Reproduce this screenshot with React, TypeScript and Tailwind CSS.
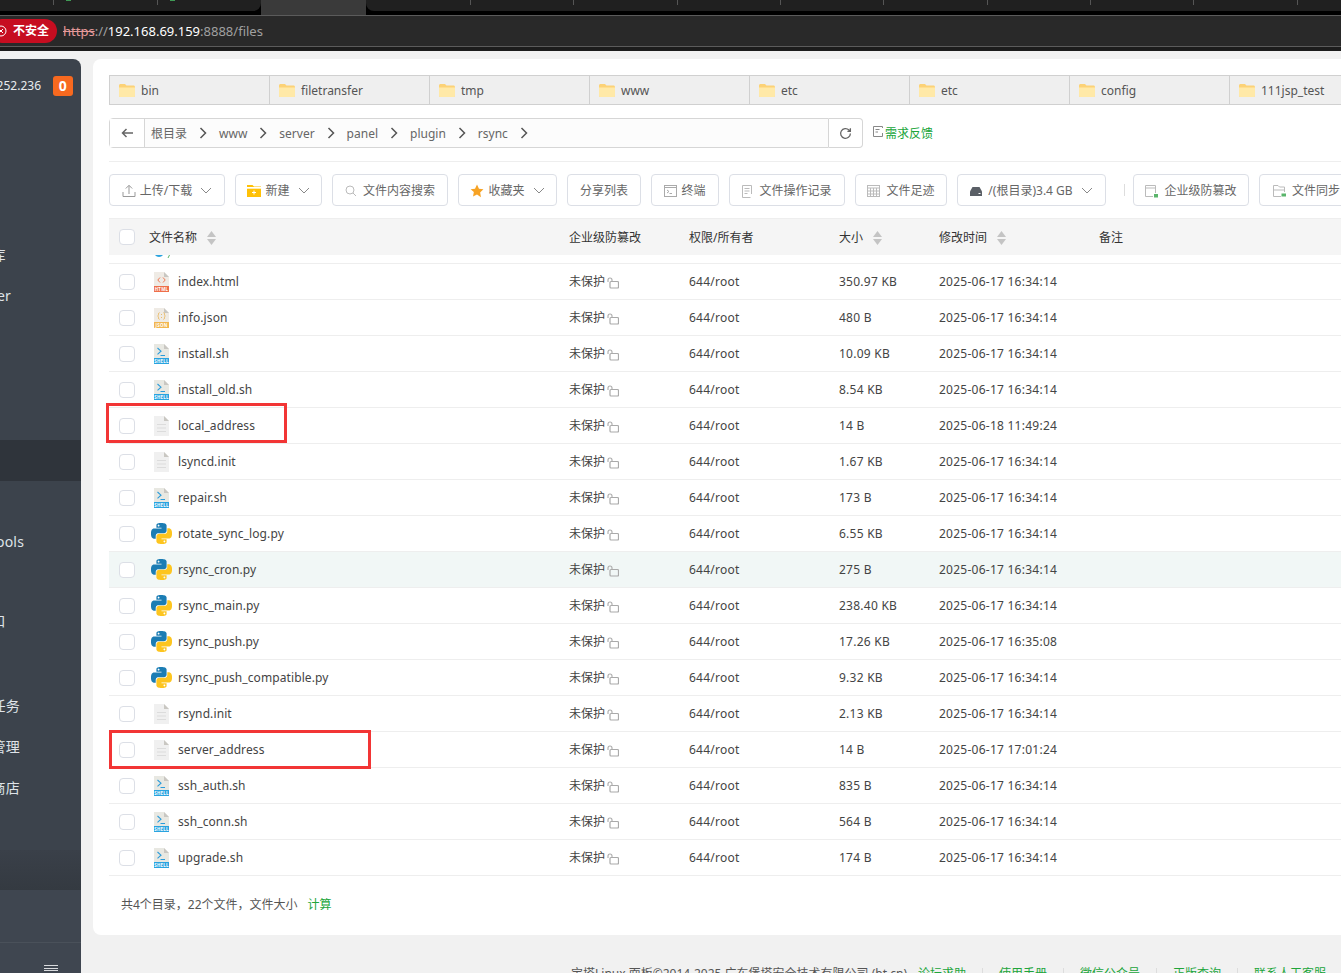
const tabs = ["bin", "filetransfer", "tmp", "www", "etc", "etc", "config", "111jsp_test"]
const crumbs = ["根目录", "www", "server", "panel", "plugin", "rsync"]
const menu = ["", "", "", "数据库", "Docker", "", "", "", "", "", "WP Tools", "", "接入口", "", "计划任务", "软件管理", "软件商店", ""]

const files = [
  { name: "index.html", icon: "html", size: "350.97 KB", time: "2025-06-17 16:34:14" },
  { name: "info.json", icon: "json", size: "480 B", time: "2025-06-17 16:34:14" },
  { name: "install.sh", icon: "shell", size: "10.09 KB", time: "2025-06-17 16:34:14" },
  { name: "install_old.sh", icon: "shell", size: "8.54 KB", time: "2025-06-17 16:34:14" },
  { name: "local_address", icon: "doc", size: "14 B", time: "2025-06-18 11:49:24" },
  { name: "lsyncd.init", icon: "doc", size: "1.67 KB", time: "2025-06-17 16:34:14" },
  { name: "repair.sh", icon: "shell", size: "173 B", time: "2025-06-17 16:34:14" },
  { name: "rotate_sync_log.py", icon: "py", size: "6.55 KB", time: "2025-06-17 16:34:14" },
  { name: "rsync_cron.py", icon: "py", size: "275 B", time: "2025-06-17 16:34:14" },
  { name: "rsync_main.py", icon: "py", size: "238.40 KB", time: "2025-06-17 16:34:14" },
  { name: "rsync_push.py", icon: "py", size: "17.26 KB", time: "2025-06-17 16:35:08" },
  { name: "rsync_push_compatible.py", icon: "py", size: "9.32 KB", time: "2025-06-17 16:34:14" },
  { name: "rsynd.init", icon: "doc", size: "2.13 KB", time: "2025-06-17 16:34:14" },
  { name: "server_address", icon: "doc", size: "14 B", time: "2025-06-17 17:01:24" },
  { name: "ssh_auth.sh", icon: "shell", size: "835 B", time: "2025-06-17 16:34:14" },
  { name: "ssh_conn.sh", icon: "shell", size: "564 B", time: "2025-06-17 16:34:14" },
  { name: "upgrade.sh", icon: "shell", size: "174 B", time: "2025-06-17 16:34:14" },
]

function Folder() {
  return (
    <svg width="16" height="13" viewBox="0 0 16 13" className="shrink-0">
      <path d="M1.5 0H6L7.5 1.5H14.5C15.3 1.5 16 2.2 16 3V11.5C16 12.3 15.3 13 14.5 13H1.5C.7 13 0 12.3 0 11.5V1.5C0 .7.7 0 1.5 0Z" fill="#fcd277" />
      <path d="M0 3.6H16V11.5C16 12.3 15.3 13 14.5 13H1.5C.7 13 0 12.3 0 11.5Z" fill="#ffe9a8" />
    </svg>
  )
}

function Chevron({ className = "" }: { className?: string }) {
  return (
    <svg width="8" height="12" viewBox="0 0 8 12" className={className}>
      <path d="M1.5 1L6.5 6L1.5 11" fill="none" stroke="#555" strokeWidth="1.5" />
    </svg>
  )
}

function Caret() {
  return (
    <svg width="12" height="7" viewBox="0 0 12 7" className="shrink-0">
      <path d="M1 1L6 6L11 1" fill="none" stroke="#888" strokeWidth="1" />
    </svg>
  )
}

function SortArrows() {
  return (
    <svg width="9" height="14" viewBox="0 0 9 14" className="ml-[10px] shrink-0">
      <path d="M4.5 0L9 6H0Z" fill="#c4c4c4" />
      <path d="M0 8H9L4.5 14Z" fill="#c4c4c4" />
    </svg>
  )
}

function Lock() {
  return (
    <svg width="12" height="12" viewBox="0 0 12 12" className="mt-[3px] ml-[2px] shrink-0">
      <path d="M1 5V3C1 1.7 1.9 1 3 1S5 1.7 5 3V4.5" fill="none" stroke="#aaa" strokeWidth="1.1" />
      <rect x="3" y="4.5" width="8.5" height="6.5" rx="1" fill="none" stroke="#aaa" strokeWidth="1.2" />
    </svg>
  )
}

function Python() {
  return (
    <svg width="21" height="21" viewBox="0 0 24 24">
      <path
        fill="#1b7db4"
        d="M14.25.18l.9.2.73.26.59.3.45.32.34.34.25.34.16.33.1.3.04.26.02.2-.01.13V8.5l-.05.63-.13.55-.21.46-.26.38-.3.31-.33.25-.35.19-.35.14-.33.1-.3.07-.26.04-.21.02H8.77l-.69.05-.59.14-.5.22-.41.27-.33.32-.27.35-.2.36-.15.37-.1.35-.07.32-.04.27-.02.21v3.06H3.17l-.21-.03-.28-.07-.32-.12-.35-.18-.36-.26-.36-.36-.35-.46-.32-.59-.28-.73-.21-.88-.14-1.05-.05-1.23.06-1.22.16-1.04.24-.87.32-.71.36-.57.4-.44.42-.33.42-.24.4-.16.36-.1.32-.05.24-.01h.16l.06.01h8.16v-.83H6.18l-.01-2.75-.02-.37.05-.34.11-.31.17-.28.25-.26.31-.23.38-.2.44-.18.51-.15.58-.12.64-.1.71-.06.77-.04.84-.02 1.27.05zm-6.3 1.98l-.23.33-.08.41.08.41.23.34.33.22.41.09.41-.09.33-.22.23-.34.08-.41-.08-.41-.23-.33-.33-.22-.41-.09-.41.09z"
      />
      <path
        fill="#fdc51f"
        d="M21.04 6.11l.28.06.32.12.35.18.36.27.36.35.35.47.32.59.28.73.21.88.14 1.04.05 1.23-.06 1.23-.16 1.04-.24.86-.32.71-.36.57-.4.45-.42.33-.42.24-.4.16-.36.09-.32.05-.24.02-.16-.01h-8.22v.82h5.84l.01 2.76.02.36-.05.34-.11.31-.17.29-.25.25-.31.24-.38.2-.44.17-.51.15-.58.13-.64.09-.71.07-.77.04-.84.01-1.27-.04-1.07-.14-.9-.2-.73-.25-.59-.3-.45-.33-.34-.34-.25-.34-.16-.33-.1-.3-.04-.25-.02-.2.01-.13v-5.34l.05-.64.13-.54.21-.46.26-.38.3-.32.33-.24.35-.2.35-.14.33-.1.3-.06.26-.04.21-.02.13-.01h5.84l.69-.05.59-.14.5-.21.41-.28.33-.32.27-.35.2-.36.15-.36.1-.35.07-.32.04-.28.02-.21V6.07h2.09l.14.01zm-6.47 14.25l-.23.33-.08.41.08.41.23.33.33.23.41.08.41-.08.33-.23.23-.33.08-.41-.08-.41-.23-.33-.33-.23-.41-.08-.41.08z"
      />
    </svg>
  )
}

function FileIcon({ type }: { type: string }) {
  if (type === "py") return <Python />
  const band = type === "html" ? "#ee6f4a" : type === "json" ? "#f2b650" : "#2aa3df"
  const page = type === "doc" ? "#f0f0f0" : type === "shell" ? "#e8e8e2" : "#efebe5"
  return (
    <svg width="15" height="20" viewBox="0 0 15 20">
      <path d="M0 0H10L15 5V20H0Z" fill={page} />
      <path d="M10 0L15 5H10Z" fill="#c9c7c2" />
      {type === "doc" ? (
        <path d="M3 8.5H12M3 12H12M3 15.5H12" stroke="#dcdcdc" strokeWidth="1" />
      ) : (
        <rect x="0" y="14" width="15" height="6" fill={band} />
      )}
      {type === "html" && <path d="M6 5.5L3.8 8L6 10.5M9 5.5L11.2 8L9 10.5" fill="none" stroke="#ee7a55" strokeWidth="1" />}
      {type === "json" && <path d="M5.5 4.5C4 4.5 5 8 3.7 8C5 8 4 11.5 5.5 11.5M9.5 4.5C11 4.5 10 8 11.3 8C10 8 11 11.5 9.5 11.5M7.5 6V7M7.5 9V10" fill="none" stroke="#eab85f" strokeWidth=".9" />}
      {type === "shell" && <path d="M3.5 4L7 7.2L3.5 10.4M6.5 11.5H11" fill="none" stroke="#2a9cdb" strokeWidth="1.1" />}
      {type !== "doc" && (
        <text x="7.5" y="18.7" fontSize="4.4" fontWeight="700" textAnchor="middle" fill="#fff">
          {type === "html" ? "HTML" : type === "json" ? "JSON" : "SHELL"}
        </text>
      )}
    </svg>
  )
}

function ToolButton({ width, icon, label, caret }: { width: string; icon?: React.ReactNode; label: string; caret?: boolean }) {
  return (
    <button className={`flex h-8 shrink-0 items-center justify-center gap-1 rounded border border-[#dcdfe6] bg-white pt-[2px] text-xs text-[#666] ${width}`}>
      {icon}
      <span>{label}</span>
      {caret && <span className="mb-[2px] ml-1"><Caret /></span>}
    </button>
  )
}

function Toolbar() {
  return (
    <div className="mt-3 flex items-center gap-[10px]">
      <ToolButton
        width="w-[116px]"
        caret
        label="上传/下载"
        icon={
          <svg width="14" height="14" viewBox="0 0 14 14" fill="none" stroke="#999" strokeWidth="1">
            <path d="M7 10V1.5M3.8 4.5L7 1.3L10.2 4.5M1 8V12.5H13V8" />
          </svg>
        }
      />
      <ToolButton
        width="w-[87px]"
        caret
        label="新建"
        icon={
          <svg width="14" height="12" viewBox="0 0 14 12">
            <path d="M0 0H5.5L7 1.5H14V12H0Z" fill="#ffc107" />
            <path d="M0 2.5H14V3.2H0ZM5 7.5H9M7 5.5V9.5" stroke="#fff" strokeWidth="1" fill="none" />
          </svg>
        }
      />
      <ToolButton
        width="w-[116px]"
        label="文件内容搜索"
        icon={
          <svg width="12" height="12" viewBox="0 0 12 12" fill="none" stroke="#bbb" strokeWidth="1" className="mr-[2px]">
            <circle cx="5" cy="5" r="4" />
            <path d="M8 8L11 11" />
          </svg>
        }
      />
      <ToolButton
        width="w-[99px]"
        caret
        label="收藏夹"
        icon={
          <svg width="14" height="14" viewBox="0 0 24 24">
            <path d="M12 1l3.4 7.2 7.6 1-5.6 5.4 1.4 7.9L12 18l-6.8 3.5 1.4-7.9L1 9.2l7.6-1z" fill="#f7a325" />
          </svg>
        }
      />
      <ToolButton width="w-[74px]" label="分享列表" />
      <ToolButton
        width="w-[68px]"
        label="终端"
        icon={
          <svg width="13" height="12" viewBox="0 0 13 12" fill="none" stroke="#aaa" strokeWidth="1">
            <rect x=".5" y=".5" width="12" height="11" />
            <path d="M.5 2.5H12.5M3 5L5 6.5L3 8M5.5 8.5H8" />
          </svg>
        }
      />
      <ToolButton
        width="w-[116px]"
        label="文件操作记录"
        icon={
          <svg width="11" height="13" viewBox="0 0 11 13" fill="none" stroke="#bbb" strokeWidth="1" className="mr-[2px]">
            <path d="M8.5 12.5H.5V.5H9.5V9M2.5 3.5H7.5M2.5 6H7.5M2.5 8.5H5.5" />
          </svg>
        }
      />
      <ToolButton
        width="w-[92px]"
        label="文件足迹"
        icon={
          <svg width="13" height="12" viewBox="0 0 13 12" fill="none" stroke="#bbb" strokeWidth="1" className="mr-[2px]">
            <rect x=".5" y=".5" width="12" height="11" />
            <path d="M.5 3H12.5M.5 6H12.5M.5 9H12.5M3.5 3V11.5M6.5 3V11.5M9.5 3V11.5" />
          </svg>
        }
      />
      <ToolButton
        width="w-[149px]"
        caret
        label="/(根目录)3.4 GB"
        icon={
          <svg width="12" height="9" viewBox="0 0 12 9" className="mr-[2px]">
            <path d="M2.5 0H9.5L12 4.5V9H0V4.5Z" fill="#5a5f66" />
            <path d="M8.5 6.5H10.5" stroke="#fff" strokeWidth="1" />
          </svg>
        }
      />
      <div className="mr-[-2px] ml-2 h-3 w-px shrink-0 bg-[#ddd]" />
      <ToolButton
        width="w-[116px]"
        label="企业级防篡改"
        icon={
          <svg width="13" height="13" viewBox="0 0 13 13" className="mr-[2px]">
            <path d="M10.5 8V.5H.5V11.5H8M.5 3H10.5" fill="none" stroke="#bbb" strokeWidth="1" />
            <rect x="9" y="9" width="4" height="3.5" fill="#5ab56b" />
          </svg>
        }
      />
      <ToolButton
        width="w-[95px]"
        label="文件同步"
        icon={
          <svg width="13" height="12" viewBox="0 0 13 12" className="mr-[2px]">
            <path d="M8 11.5H.5V.5H5L6.5 2H11.5V7M.5 5H12" fill="none" stroke="#bbb" strokeWidth="1" />
            <rect x="8.5" y="8.5" width="4.5" height="3" fill="#5ab56b" />
          </svg>
        }
      />
    </div>
  )
}

function Checkbox() {
  return <div className="ml-[10px] h-4 w-4 rounded-sm border border-[#dcdfe6] bg-white" />
}

const columns = "grid grid-cols-[40px_420px_120px_150px_100px_160px_1fr] items-center"

function FileTable() {
  return (
    <div className="mt-3 text-xs text-[#444]">
      <div className={`${columns} h-[37px] border-t border-[#eeeeee] bg-[#f5f5f5] text-[#333]`}>
        <Checkbox />
        <div className="flex items-center pt-[2px]">文件名称<SortArrows /></div>
        <div className="pt-[2px]">企业级防篡改</div>
        <div className="pt-[2px]">权限/所有者</div>
        <div className="flex items-center pt-[2px]">大小<SortArrows /></div>
        <div className="flex items-center pt-[2px]">修改时间<SortArrows /></div>
        <div className="pt-[2px]">备注</div>
      </div>
      <div className="h-[9px] overflow-hidden border-b border-[#eeeeee]">
        <svg width="24" height="4" viewBox="0 0 24 4" className="ml-[44px]">
          <path d="M2 0C4 2.5 8 2.5 10 0Z" fill="#2aa3df" />
          <path d="M15 3L16.5 0" stroke="#5ab56b" strokeWidth="1" />
        </svg>
      </div>
      {files.map((f) => (
        <div key={f.name} className={`${columns} relative h-9 border-b border-[#eeeeee] tracking-[0.25px] ${f.name === "rsync_cron.py" ? "bg-[#f1f7f6]" : ""}`}>
          <Checkbox />
          <div className="flex items-center">
            <div className="flex w-[25px] justify-center"><FileIcon type={f.icon} /></div>
            <span className="ml-1 tracking-[0.1px]">{f.name}</span>
          </div>
          <div className="flex items-center tracking-normal">未保护<Lock /></div>
          <div>644/root</div>
          <div>{f.size}</div>
          <div>{f.time}</div>
          <div />
          {f.name === "local_address" && <div className="absolute top-[-5px] left-[-3px] h-[40px] w-[181px] border-[3px] border-[#f23535]" />}
          {f.name === "server_address" && <div className="absolute top-[-2px] left-0 h-[39px] w-[262px] border-[3px] border-[#f23535]" />}
        </div>
      ))}
      <div className="flex h-[59px] items-center pb-[2px] pl-3 text-[#555]">
        共4个目录，22个文件，文件大小
        <span className="ml-[10px] text-[#20a53a]">计算</span>
      </div>
    </div>
  )
}

function Sidebar() {
  return (
    <aside className="mt-2 flex h-[914px] w-[81px] shrink-0 flex-col overflow-hidden rounded-tr-lg bg-[#3c434c] text-sm tracking-[0.25px] text-[#dfe3e8]">
      <div className="flex h-[53px] shrink-0 items-center justify-end gap-3 pr-2">
        <span className="whitespace-nowrap text-xs tracking-normal text-[#e8ebee]">252.236</span>
        <span className="flex h-5 w-5 shrink-0 items-center justify-center rounded-[3px] bg-[#f7691f] font-bold text-white">0</span>
      </div>
      {menu.map((m, i) => (
        <div key={i} className={`flex h-[41px] shrink-0 items-center whitespace-nowrap ${i === 8 ? "bg-[#2f343b]" : ""} ${i === 12 ? "pb-2" : "pb-[2px]"}`}>
          <span className="-ml-[37px]">{m}</span>
        </div>
      ))}
      <div className="h-10 shrink-0 bg-gradient-to-b from-[#3a4049] to-[#343a41]" />
      <div className="h-[53px] shrink-0 border-b border-[#4a515a] bg-[#3f4650]" />
      <div className="flex flex-1 justify-end bg-[#3f4650] pt-[22px] pr-[23px]">
        <div className="flex h-[6px] w-[14px] flex-col justify-between">
          <div className="h-px bg-[#d8dadd]" />
          <div className="h-px bg-[#d8dadd]" />
          <div className="h-px bg-[#d8dadd]" />
        </div>
      </div>
    </aside>
  )
}

function BrowserBar() {
  const dividers = ["left-[53px]", "left-[157px]"]
  const rightDividers = ["left-[104px]", "left-[207px]", "left-[311px]", "left-[414px]", "left-[517px]", "left-[621px]", "left-[724px]", "left-[827px]", "left-[931px]"]
  return (
    <div className="shrink-0 bg-[#1c1c1c]">
      <div className="flex h-[15px] bg-black">
        <div className="relative h-[11px] w-[261px] rounded-br-lg bg-[#202020]">
          {dividers.map((d) => <div key={d} className={`absolute top-0 h-[5px] w-px bg-[#555] ${d}`} />)}
          <div className="absolute top-0 left-[66px] h-px w-[5px] bg-[#3f9a55]" />
          <div className="absolute top-0 left-[170px] h-px w-[5px] bg-[#3f9a55]" />
        </div>
        <div className="h-full w-[105px] bg-[#3a3a3a]" />
        <div className="relative h-[11px] flex-1 rounded-bl-lg bg-[#202020]">
          {rightDividers.map((d) => <div key={d} className={`absolute top-0 h-[5px] w-px bg-[#555] ${d}`} />)}
        </div>
      </div>
      <div className="flex h-[32px] items-center border-y border-[#5b5b5b] bg-[#292929]">
        <div className="-ml-[10px] flex h-6 w-[67px] shrink-0 items-center rounded-full bg-[#c60d20] pl-[5px] text-xs font-bold text-white">
          <svg width="12" height="12" viewBox="0 0 12 12" fill="none" stroke="#fff" strokeWidth="1" className="mr-[6px]">
            <circle cx="6" cy="6" r="5" />
            <path d="M4 4L8 8M8 4L4 8" />
          </svg>
          不安全
        </div>
        <div className="ml-[6px] pt-[2px] text-[13px] text-[#a0a0a0]">
          <span className="text-[#e59a9a] line-through">https</span>://<span className="text-white">192.168.69.159</span>:8888/files
        </div>
      </div>
      <div className="h-1 bg-[#1c1c1c]" />
    </div>
  )
}

export default function App() {
  return (
    <div className="flex h-[973px] w-[1341px] flex-col overflow-hidden bg-[#f1f1f1] font-['Noto_Sans','Noto_Sans_CJK_SC',sans-serif]">
      <BrowserBar />
      <div className="flex min-h-0 flex-1">
        <Sidebar />
        <main className="ml-3 mt-2 w-[1400px] shrink-0">
          <div className="h-[876px] rounded-lg bg-white pt-4 pl-4">
            <div className="flex">
              {tabs.map((t, i) => (
                <div key={i} className="-mr-px flex h-[30px] w-[161px] shrink-0 items-center gap-[6px] border border-[#d0d0d0] bg-[#efefef] pl-[9px] text-xs text-[#555]">
                  <Folder />
                  <span className="pt-[2px]">{t}</span>
                </div>
              ))}
            </div>

            <div className="mt-[13px] flex items-center">
              <div className="flex h-[30px] w-[720px] shrink-0 items-center rounded-l-sm border border-[#d6d6d6] bg-[#fcfcfc] text-xs text-[#666]">
                <div className="mr-[6px] flex h-full w-[35px] shrink-0 items-center justify-center border-r border-[#d6d6d6] bg-white">
                  <svg width="12" height="10" viewBox="0 0 12 10" fill="none" stroke="#666" strokeWidth="1.5">
                    <path d="M12 5H1.5M5.5 1L1.5 5L5.5 9" />
                  </svg>
                </div>
                {crumbs.map((c) => (
                  <div key={c} className="flex items-center">
                    <span className="pt-[2px]">{c}</span>
                    <Chevron className="mx-3" />
                  </div>
                ))}
              </div>
              <div className="flex h-[30px] w-[34px] shrink-0 items-center justify-center rounded-r-sm border border-l-0 border-[#d6d6d6]">
                <svg width="13" height="13" viewBox="0 0 24 24" fill="none" stroke="#666" strokeWidth="2.4">
                  <path d="M21 12a9 9 0 1 1-2.6-6.4L21 8M21 2.5V8H15.5" />
                </svg>
              </div>
              <div className="ml-[10px] flex items-center text-xs text-[#20a53a]">
                <svg width="12" height="12" viewBox="0 0 12 12" fill="none" stroke="#888" strokeWidth="1" className="mb-[2px]">
                  <path d="M9.5 7V10.5H.5V.5H9.5V2M2.5 3.5H6.5M2.5 6H5" />
                </svg>
                <span className="pt-[2px]">需求反馈</span>
              </div>
            </div>

            <div className="mt-[13px] border-t border-[#eeeeee]" />
            <Toolbar />
            <FileTable />
          </div>

          <div className="mt-[31px] flex items-center pl-[478px] text-xs leading-4 text-[#555]">
            <span className="whitespace-nowrap">宝塔Linux 面板©2014-2025 广东堡塔安全技术有限公司 (bt.cn)</span>
            <div className="ml-[11px] flex shrink-0 items-center text-[#20a53a]">
              <span>论坛求助</span>
              <div className="mx-4 h-3 w-px bg-[#ddd]" />
              <span>使用手册</span>
              <div className="mx-4 h-3 w-px bg-[#ddd]" />
              <span>微信公众号</span>
              <div className="mx-4 h-3 w-px bg-[#ddd]" />
              <span>正版查询</span>
              <div className="mx-4 h-3 w-px bg-[#ddd]" />
              <span>联系人工客服</span>
            </div>
          </div>
        </main>
      </div>
    </div>
  )
}
